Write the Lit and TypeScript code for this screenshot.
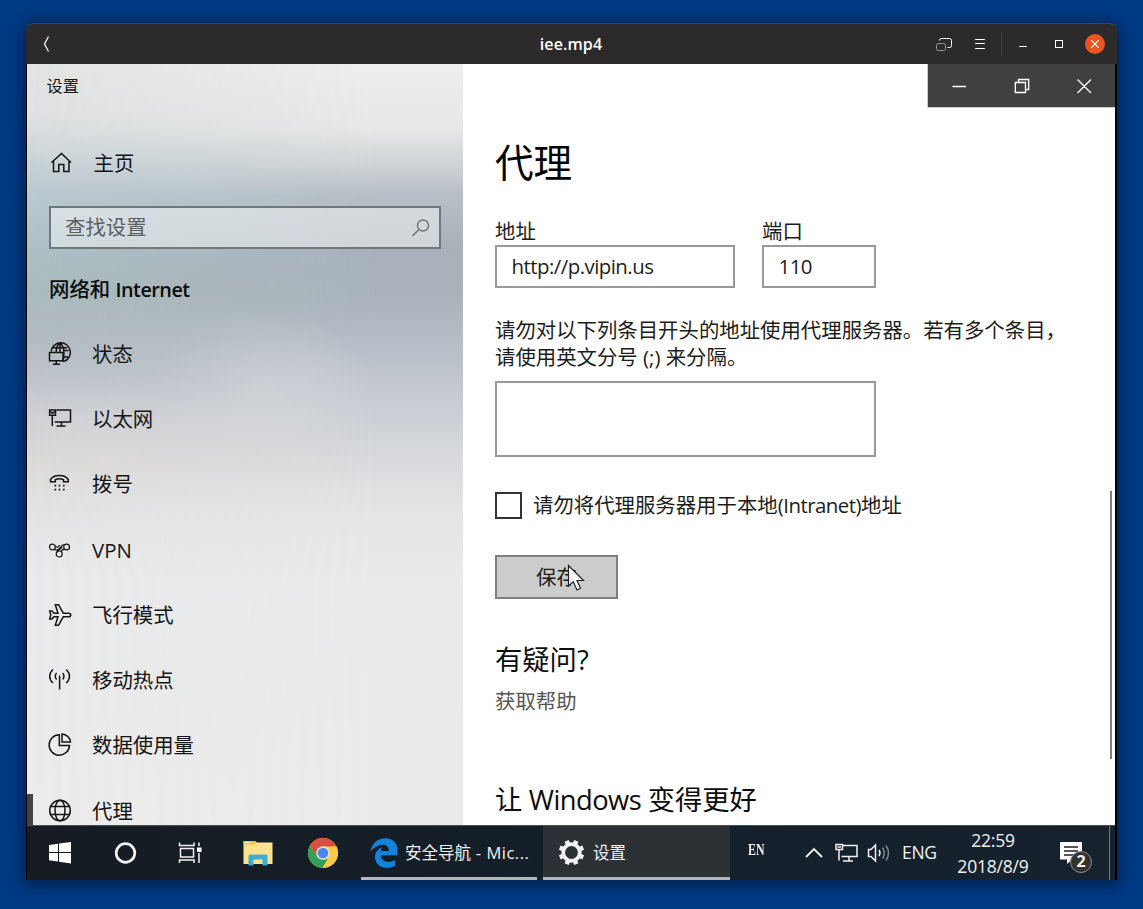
import { LitElement, html, css, svg } from "lit";
import { customElement } from "lit/decorators.js";

const icons: Record<string, unknown> = {
  home: svg`<path d="M2.500 11.500 L12.500 2.500 L22 11.500 M4.500 10 V20.500 H9.800 V13.500 H14.800 V20.500 H20 V10" />`,
  status: svg`<path d="M3.200 9.500 A9.600 9.600 0 1 1 15.500 19.600 M16.200 8.500 H20.600 M5 5.800 H19.200 M15.500 15 H20 M8.200 10 C8.200 5 10 2.500 12 1.200 C14.500 3 15.900 6 15.900 10.500 C15.900 14 15.800 17 15 19.600 M12 1.200 V10" /><path d="M1.500 10.500 H15 V18.700 H1.500 Z M8.300 19 V22 M5 22.200 H12" />`,
  ethernet: svg`<path d="M8.500 3 H22.500 V15 H6.800 M1.600 3 H7.500 V8.300 H1.600 Z M2.500 4.500 L4.500 6.300 L6.700 4.500 M4.300 8.300 V19 M13.500 15 V19 M8.500 19 H17.500" />`,
  dial: svg`<path d="M2.500 9.800 V7.500 C6 2.200 17 2.200 20.200 7.500 V9.800 H15.500 V7.800 C13 6.600 9.800 6.600 7.300 7.800 V9.800 Z" /><path class="dots" d="M6.500 13.600h1.600M10.700 13.600h1.600M15 13.600h1.600M6.500 17.600h1.600M10.700 17.600h1.600M15 17.600h1.600" />`,
  vpn: svg`<g class="thin"><circle cx="4.400" cy="9" r="2.900" /><circle cx="18.600" cy="9" r="2.900" /><circle cx="11.200" cy="16" r="3" /><path d="M7 7.700 C8.300 9.800 10.500 9.500 11.500 7 M6.300 11.200 C9 13.500 11.500 10.500 13 8.500 Q14.500 6.300 16.500 6.900 M8.700 14.300 L14.200 9 M16.700 11.200 Q13.500 11.500 13.400 14" /></g>`,
  plane: svg`<path d="M1.700 8 H4 L6 10.200 H10 L7.300 1.700 H10.500 L15.300 10.200 H20.500 C23.500 10.200 23.500 13.800 20.500 13.800 H15.300 L10.500 22.300 H7.300 L10 13.800 H6 L4 16 H1.700 L2.800 12 Z" />`,
  hotspot: svg`<path d="M11.600 7.500 V21.500 M8.600 5 C6.800 6.600 6.800 9.800 8.600 11.500 M5 1.500 C.600 5.500 .600 11 5 15 M14.600 5 C16.400 6.600 16.400 9.800 14.600 11.500 M18.200 1.500 C22.600 5.500 22.600 11 18.200 15" />`,
  data: svg`<path d="M11.300 1.800 A10.200 10.200 0 1 0 21.500 12.600 H11.300 Z M14 1 V9 H22.500 C22.500 5 18.500 1.300 14 1 Z" />`,
  globe: svg`<circle cx="12" cy="11.500" r="10.300" /><ellipse cx="12" cy="11.500" rx="5" ry="10.300" /><path d="M2.800 7.500 H21.200 M2.800 15.500 H21.200" />`,
};

const items: [string, string][] = [
  ["status", "状态"],
  ["ethernet", "以太网"],
  ["dial", "拨号"],
  ["vpn", "VPN"],
  ["plane", "飞行模式"],
  ["hotspot", "移动热点"],
  ["data", "数据使用量"],
  ["globe", "代理"],
];

const glyph = (name: string) =>
  html`<svg class="glyph" width="24" height="24" viewBox="0 0 24 24">${icons[name]}</svg>`;

@customElement("title-bar")
class TitleBar extends LitElement {
  static styles = css`
    :host { display: grid; grid-template-columns: 1fr auto 1fr; align-items: center; height: 41px; box-sizing: border-box;
      background: #2c2a2b; border-top: 1px solid #464445; border-radius: 8px 8px 0 0; color: #fff; }
    .back { margin-left: 17px; }
    .name { font: 600 16px/24px "Open Sans", sans-serif; letter-spacing: 0.1px; margin-right: 1px; }
    .right { display: flex; align-items: center; justify-content: flex-end; }
    svg { display: block; fill: none; stroke: #fff; }
  `;
  render() {
    return html`
      <svg class="back" width="8" height="18" viewBox="0 0 8 18"><path d="M5.500 1.500 L1.500 9 L5.500 16.500" stroke-width="1.200" /></svg>
      <div class="name">iee.mp4</div>
      <div class="right">
        <svg width="18" height="16" viewBox="0 0 18 16"><path d="M3.500 4.500 V4 Q3.500 2.500 5.500 2.500 H13.500 Q15.500 2.500 15.500 4.500 V9.500 Q15.500 11.500 13.500 11.500 H11.500" /><rect x="0.500" y="7.500" width="9" height="7" rx="2" stroke="#9a9899" /></svg>
        <svg width="47" height="16" viewBox="0 0 47 16"><path d="M21 3.500 H31 M21 7.500 H31 M21 12.500 H31" /></svg>
        <svg width="116" height="26" viewBox="0 0 116 26">
          <path d="M0.500 1 V25" stroke="#3c3a3b" />
          <path d="M18 15.500 H26" /><rect x="54.500" y="9.500" width="7" height="7" />
          <circle cx="94" cy="13" r="10" fill="#e95420" stroke="none" />
          <path d="M90.200 9.200 L97.800 16.800 M97.800 9.200 L90.200 16.800" stroke-width="1.200" />
        </svg>
      </div>`;
  }
}

@customElement("settings-nav")
class SettingsNav extends LitElement {
  static styles = css`
    :host { display: block; position: relative; overflow: hidden; color: #151515; font-size: 20.4px; line-height: 30px;
      background:
        radial-gradient(ellipse 110px 90px at 255px 585px, #f0e8e6aa, #f0e8e600),
        linear-gradient(#e3e4e4 0, #dfe1e2 50px, #ced7da 90px, #bccbd1 125px, #adc1c6 180px, #abbcbe 225px, #b3bcc2 275px, #bfc4cb 315px, #d2d3d7 355px, #dedbd9 400px, #e4e4e5 450px, #e9eaeb 510px, #ececec 100%); }
    .shade { position: absolute; inset: 0;
      background:
        radial-gradient(ellipse 110px 80px at 235px 325px, #dadcdf99, #dadcdf00),
        linear-gradient(#eeeeed 0, #e6e7e7 65px, #cfd3d6 100px, #b6bec6 132px, #a8b1ba 185px, #a9b2ba 230px, #b5bcc5 275px, #c2c7cf 315px, #cbcfd5 350px, #d8dadd 395px, #e4e5e7 450px, #e9eaeb 520px, #ebebeb 100%);
      -webkit-mask-image: linear-gradient(90deg, transparent, #000 80%); mask-image: linear-gradient(90deg, transparent, #000 80%); }
    .body { position: relative; }
    .caption { padding: 7px 0 0 19.500px; font-size: 16.200px; }
    .row { display: flex; align-items: center; height: 65.300px; padding-left: 21px; gap: 20px; position: relative; }
    .home { height: 40px; margin-top: 42px; padding-left: 22px; gap: 20.500px; }
    .row.current::before { content: ""; position: absolute; left: 0; top: 15.500px; width: 6px; height: 40px; background: #434343; }
    .search { display: flex; align-items: center; justify-content: space-between; box-sizing: border-box; width: 392px; height: 43px;
      margin: 23px 0 0 22px; padding: 0 9px 0 14px; border: 2px solid #70787c; background: #ffffff73; color: #5a6064; }
    .search span { margin-top: -1px; }
    .heading { margin: 25px 0 0 22px; font-weight: 500; color: #0b0b0b; white-space: nowrap; }
    .heading b { font-weight: 600; font-size: 19.800px; letter-spacing: -0.500px; }
    .list { margin-top: 16px; }
    svg { display: block; flex: none; fill: none; stroke: #151515; stroke-width: 1.500; }
    .thin { stroke-width: 1.200; }
    .dots { stroke-width: 1.600; }
    .lens { stroke: #6a7074; stroke-width: 1.400; }
  `;
  render() {
    return html`
      <div class="shade"></div>
      <div class="body">
        <div class="caption">设置</div>
        <div class="row home">${glyph("home")}<span>主页</span></div>
        <div class="search"><span>查找设置</span>
          <svg class="lens" width="18" height="18" viewBox="0 0 18 18"><circle cx="11" cy="6.500" r="5.500" /><path d="M7 10.500 L0.500 17" /></svg></div>
        <div class="heading">网络和 <b>Internet</b></div>
        <div class="list">${items.map(([icon, label], i) => html`
          <div class="row ${i === items.length - 1 ? "current" : ""}">${glyph(icon)}<span>${label}</span></div>`)}
        </div>
      </div>`;
  }
}

@customElement("proxy-page")
class ProxyPage extends LitElement {
  static styles = css`
    :host { display: block; position: relative; background: #fff; color: #1c1c1c; font-size: 20.400px; line-height: 27.300px; padding: 0 0 0 32px; box-sizing: border-box; overflow: hidden; }
    .controls { position: absolute; right: 0; top: 0; width: 187px; height: 43px; background: #404040; box-shadow: 0 0 0 0.500px #999; }
    .controls svg { display: block; fill: none; stroke: #fff; stroke-width: 1.300; }
    .thumb { position: absolute; right: 3px; top: 427px; width: 2px; height: 268px; background: #7d7d7d; }
    h1 { margin: 70px 0 0; font-size: 38.600px; line-height: 56px; font-weight: 400; color: #000; }
    .fields { display: flex; gap: 27px; margin-top: 28px; white-space: nowrap; }
    .box { box-sizing: border-box; height: 43px; border: 2px solid #999; padding: 0 14.500px; line-height: 38px; }
    .addr { width: 240px; letter-spacing: -0.520px; }
    .port { width: 114px; letter-spacing: -0.500px; }
    .note { margin: 28.500px 0 0; white-space: nowrap; }
    .area { width: 381px; height: 76px; margin-top: 10px; }
    .check { display: flex; align-items: center; gap: 11px; margin-top: 34.500px; white-space: nowrap; }
    .latin { letter-spacing: -0.500px; }
    .tick { box-sizing: border-box; width: 27px; height: 27px; border: 2.500px solid #333; }
    .save { box-sizing: border-box; position: relative; width: 123px; height: 44px; margin-top: 35.500px; border: 2px solid #7f7f7f; background: #ccc; line-height: 40px; text-align: center; }
    .cursor { position: absolute; left: 69.500px; top: 7px; }
    h2 { margin: 43px 0 0; font-size: 27.300px; line-height: 36px; font-weight: 400; color: #0d0d0d; white-space: nowrap; }
    h2 .latin { letter-spacing: -0.550px; }
    .link { margin-top: 10px; color: #555; }
    .last { margin-top: 67px; }
  `;
  render() {
    return html`
      <h1>代理</h1>
      <div class="fields">
        <div><div>地址</div><div class="box addr">http://p.vipin.us</div></div>
        <div><div>端口</div><div class="box port">110</div></div>
      </div>
      <p class="note">请勿对以下列条目开头的地址使用代理服务器。若有多个条目，<br />请使用英文分号 (;) 来分隔。</p>
      <div class="box area"></div>
      <div class="check"><div class="tick"></div><span>请勿将代理服务器用于本地<span class="latin">(Intranet)</span>地址</span></div>
      <div class="save">保存
        <svg class="cursor" width="20" height="30" viewBox="0 0 20 30"><path d="M1.500 1.500 V22 L6.300 17.800 L10 26 L13.500 24.300 L10 16.500 H16.500 Z" fill="#fff" stroke="#222" stroke-width="1.200" /></svg>
      </div>
      <h2>有疑问?</h2>
      <div class="link">获取帮助</div>
      <h2 class="last">让<span class="latin"> Windows </span>变得更好</h2>
      <div class="controls"><svg width="187" height="43" viewBox="0 0 187 43">
        <path d="M24.500 22.500 H38 M87.300 18.500 H97.500 V28.500 H87.300 Z M90.500 18.500 V15.500 H100.700 V25.500 H97.500 M149.500 15.500 L163 29 M163 15.500 L149.500 29" /></svg></div>
      <div class="thumb"></div>`;
  }
}

@customElement("task-bar")
class TaskBar extends LitElement {
  static styles = css`
    :host { display: flex; height: 55px; background: linear-gradient(90deg, #171c23, #151e27 35%, #14212c 75%, #16222d); color: #f2f2f2; font-size: 16.500px; line-height: 26px; box-sizing: border-box; border-top: 1px solid #46514f; white-space: nowrap; }
    svg { display: block; flex: none; fill: none; stroke: #f2f2f2; stroke-width: 1.500; }
    .cell { width: 65px; display: flex; align-items: center; justify-content: center; }
    .folder { width: 72px; }
    .chrome { width: 58px; }
    .task { box-sizing: border-box; display: flex; align-items: center; border-bottom: 3px solid #b4b6b8; padding-top: 2px; }
    .edge { width: 176px; margin-left: 9px; padding-left: 9px; gap: 6px; }
    .edge .latin { letter-spacing: 0.500px; }
    .gear { width: 187px; margin-left: 6px; padding-left: 15px; gap: 8px; background: #2c3135; }
    .ime { font: 700 16px/20px "Liberation Serif", serif; margin: 14px 0 0 18px; width: 57px; transform: scaleX(0.740); transform-origin: 0 50%; }
    .tray { display: flex; align-items: center; font-size: 17.500px; }
    .net { margin-left: 12px; }
    .volume { margin-left: 8px; }
    .eng { width: 45px; margin: -2px 0 0 11px; letter-spacing: -0.300px; }
    .clock { width: 92px; margin-top: -1px; text-align: center; font-size: 17.500px; letter-spacing: -0.200px; }
    .note { position: relative; margin-left: 20px; }
    .count { position: absolute; left: 11px; top: 10px; box-sizing: border-box; width: 22px; height: 22px; border-radius: 50%; border: 1px solid #8a8a8a; background: #333; font-size: 16px; font-weight: 700; line-height: 19px; text-align: center; }
    .peek { width: 1px; background: #6d767d; margin-left: auto; margin-right: 5px; }
  `;
  render() {
    return html`
      <div class="cell"><svg width="24" height="24" viewBox="0 0 24 24"><path d="M1 4 L10 2.700 V11 H1 Z M11 2.600 L23 1 V11 H11 Z M1 12 H10 V20.500 L1 19.300 Z M11 12 H23 V22.600 L11 20.800 Z" fill="#fff" stroke="none" /></svg></div>
      <div class="cell"><svg width="24" height="24" viewBox="0 0 24 24"><circle cx="12.500" cy="12" r="9.300" stroke-width="2.700" /></svg></div>
      <div class="cell"><svg width="24" height="24" viewBox="0 0 24 24"><path d="M1.500 1.500 V4.500 H16 V1.500 M2.500 7.500 H15.500 V16 H2.500 Z M1.500 22 V19 H16 V22 M21 1.500 V5 M21 12 V22" /><rect x="19" y="6.500" width="4.500" height="4.500" fill="#fff" stroke="none" /></svg></div>
      <div class="cell folder"><svg width="30" height="26" viewBox="0 0 30 26"><g stroke="none"><path d="M.500 1 H12 L14 2.500 H29.500 V24 H.500 Z" fill="#fde28e" /><path d="M.500 1 H12 L13.500 2.700 L12 4.500 H.500 Z" fill="#f3c648" /><path d="M2 2h5v1H2z" fill="#fff4c9" /><path d="M5.500 25.500 V16 Q5.500 14.500 7 14.500 H23 Q24.500 14.500 24.500 16 V25.500 H19.500 V19.500 H10.500 V25.500 Z" fill="#3dadd8" /></g></svg></div>
      <div class="cell chrome"><svg width="30" height="30" viewBox="0 0 30 30"><g stroke="none"><circle cx="15" cy="15" r="15" fill="#fccb45" /><path d="M2 7.500 A15 15 0 0 1 28.500 8.500 L15 8.500 L8.500 18.500 Z" fill="#d95040" /><path d="M2 7.500 L9 18.800 Q13 23 20 20.500 L14.500 30 A15 15 0 0 1 2 7.500 Z" fill="#31a05a" /><path d="M28.500 8.500 A15 15 0 0 1 14.500 30 L21.500 18 V9 Z" fill="#fccb45" /><circle cx="15" cy="15" r="6.800" fill="#e8e4dc" /><circle cx="15" cy="15" r="5.300" fill="#4a87ee" /></g></svg></div>
      <div class="task edge"><svg width="29" height="30" viewBox="0 0 29 30"><path stroke="none" fill="#1183dc" d="M0.500 13.500 C2 5.500 7.500 .300 15.500 .300 C23.500 .300 27.500 6 27.500 13 V17.300 H11 C11 24.500 19.500 25.500 25 22 V27.800 C18 32 5.500 30.500 5 19 C5 14.500 8 10.500 12.500 9 C11 10.500 10.800 12 10.800 13 H18.800 C19 4.500 7.500 4.800 0.500 13.500 Z" /></svg><span>安全导航<span class="latin"> - Mic...</span></span></div>
      <div class="task gear"><svg width="27" height="27" viewBox="0 0 26 26"><circle cx="13" cy="13" r="8" stroke-width="3.600" /><g stroke-width="4.400"><path d="M13 5 V0.800" transform="rotate(22.500 13 13)" /><path d="M13 5 V0.800" transform="rotate(67.500 13 13)" /><path d="M13 5 V0.800" transform="rotate(112.500 13 13)" /><path d="M13 5 V0.800" transform="rotate(157.500 13 13)" /><path d="M13 5 V0.800" transform="rotate(202.500 13 13)" /><path d="M13 5 V0.800" transform="rotate(247.500 13 13)" /><path d="M13 5 V0.800" transform="rotate(292.500 13 13)" /><path d="M13 5 V0.800" transform="rotate(337.500 13 13)" /></g></svg><span>设置</span></div>
      <div class="ime">EN</div>
      <div class="tray">
        <svg width="18" height="12" viewBox="0 0 18 12"><path d="M1 10 L9 2 L17 10" stroke-width="1.800" /></svg>
        <svg class="net" width="24" height="22" viewBox="0 0 24 22"><path d="M8 3.500 H22 V14.500 H6.500 M1 2.500 H7.500 V7.500 H1 Z M2.500 5 H6 M4 7.500 V18.500 M14 14.500 V18.500 M8 19 H18" /></svg>
        <svg class="volume" width="24" height="20" viewBox="0 0 24 20"><path d="M1.500 6.500 H4 L8.500 2 V18 L4 13.500 H1.500 Z M12 7 Q14 10 12 13" /><path d="M15.500 4.500 Q19 10 15.500 15.500 M19 2.500 Q24 10 19 17.500" stroke="#7d878e" /></svg>
        <div class="eng">ENG</div>
        <div class="clock">22:59<br />2018/8/9</div>
        <div class="note"><svg width="24" height="24" viewBox="0 0 24 24"><path d="M1 1 H23 V18.500 H13 L8 23 V18.500 H1 Z" fill="#fff" stroke="none" /><path d="M5 6 H19 M5 10 H19 M5 14 H14" stroke="#17222c" /></svg><div class="count">2</div></div>
      </div>
      <div class="peek"></div>`;
  }
}

@customElement("app-root")
class AppRoot extends LitElement {
  static styles = css`
    :host { display: block; width: 1143px; height: 909px; box-sizing: border-box; padding: 23px 26px 29px; background: #003a85; overflow: hidden;
      font-family: "Open Sans", "Noto Sans CJK SC", sans-serif; }
    .window { width: 1091px; height: 857px; border-radius: 8px 8px 0 0; box-shadow: 0 3px 16px 3px #00102a99; }
    .video { box-sizing: border-box; height: 816px; padding: 0 2px 0 1px; background: #000; display: grid; grid-template: 761px 55px / 436px 1fr; }
    task-bar { grid-column: 1 / 3; }
  `;
  render() {
    return html`<div class="window"><title-bar></title-bar>
      <div class="video"><settings-nav></settings-nav><proxy-page></proxy-page><task-bar></task-bar></div></div>`;
  }
}
